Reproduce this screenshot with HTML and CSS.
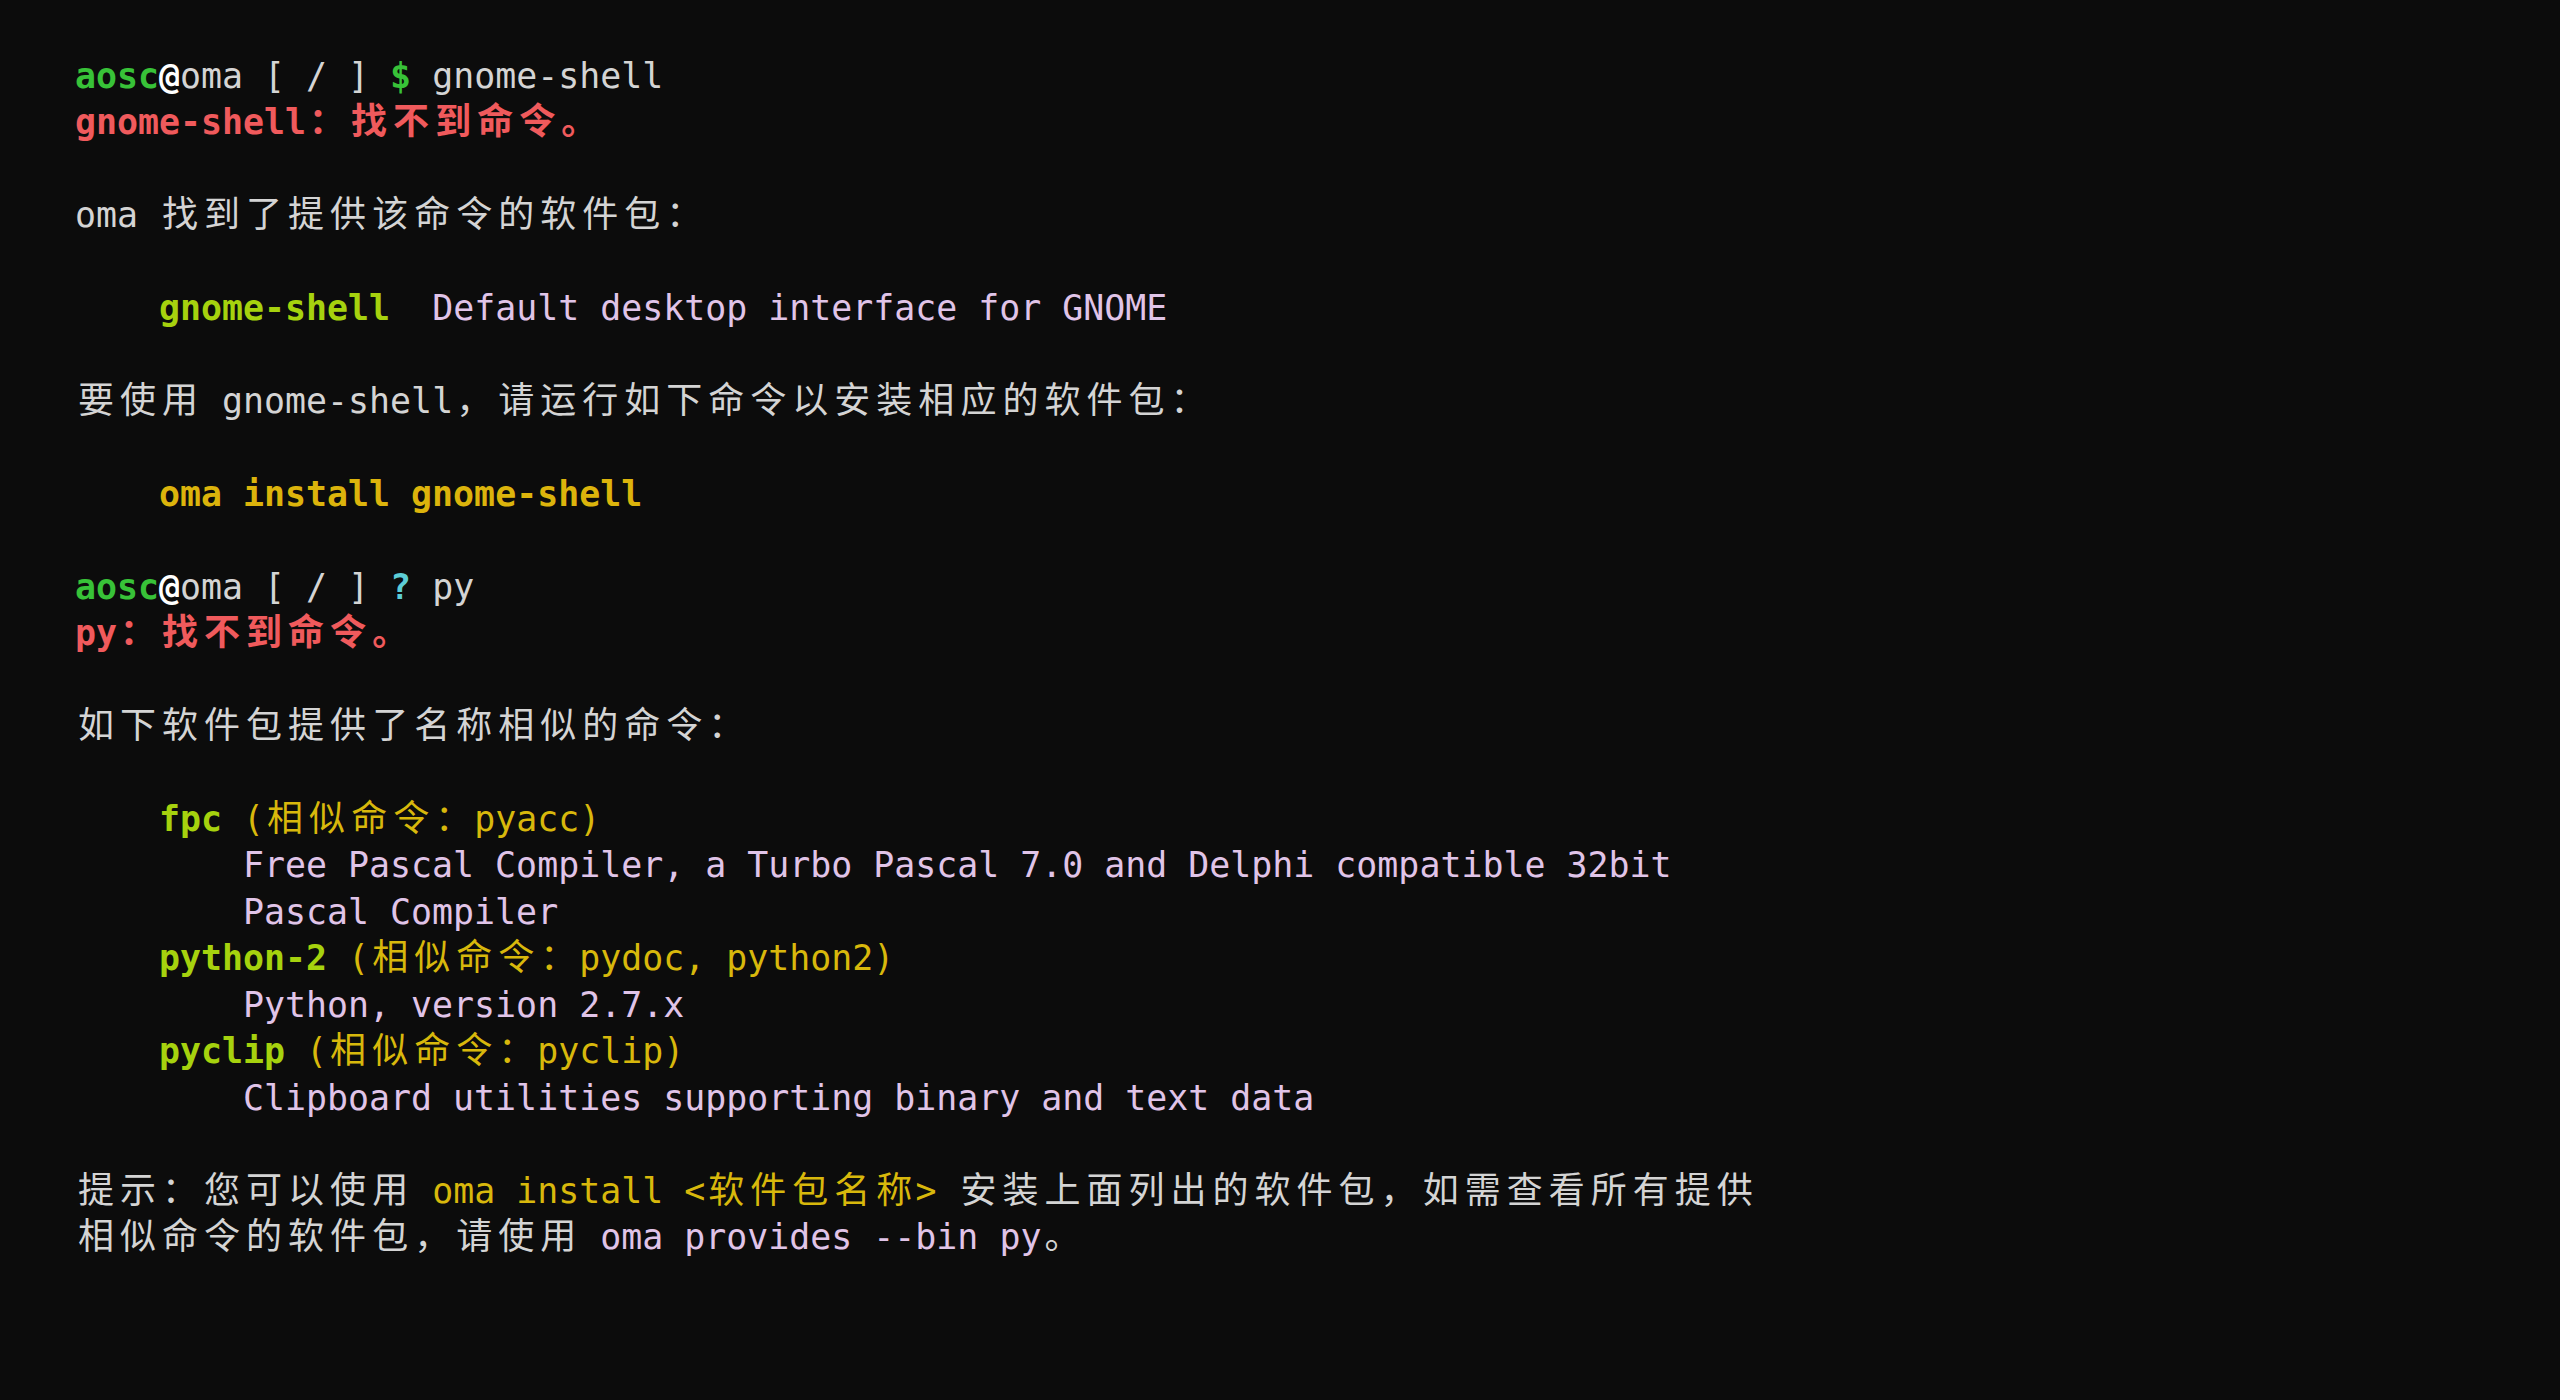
FILE: index.html
```html
<!DOCTYPE html>
<html lang="zh-CN">
<head>
<meta charset="utf-8">
<title>oma command-not-found</title>
<link rel="stylesheet" href="styles.css">
</head>
<body>
<div class="term">
<div class="line"><span class="b green">aosc</span><span class="b white">@</span>oma [ / ] <span class="b green">$</span> gnome-shell</div>
<div class="line b red">gnome-shell<span class="w">：找不到命令。</span></div>
<div class="line"></div>
<div class="line">oma <span class="w">找到了提供该命令的软件包：</span></div>
<div class="line"></div>
<div class="line">    <span class="b lime">gnome-shell</span>  <span class="pink">Default desktop interface for GNOME</span></div>
<div class="line"></div>
<div class="line"><span class="w">要使用</span> gnome-shell<span class="w">，请运行如下命令以安装相应的软件包：</span></div>
<div class="line"></div>
<div class="line">    <span class="b gold">oma install gnome-shell</span></div>
<div class="line"></div>
<div class="line"><span class="b green">aosc</span><span class="b white">@</span>oma [ / ] <span class="b cyan">?</span> py</div>
<div class="line b red">py<span class="w">：找不到命令。</span></div>
<div class="line"></div>
<div class="line"><span class="w">如下软件包提供了名称相似的命令：</span></div>
<div class="line"></div>
<div class="line">    <span class="b lime">fpc</span> <span class="yellow">(<span class="w">相似命令：</span>pyacc)</span></div>
<div class="line pink">        Free Pascal Compiler, a Turbo Pascal 7.0 and Delphi compatible 32bit</div>
<div class="line pink">        Pascal Compiler</div>
<div class="line">    <span class="b lime">python-2</span> <span class="yellow">(<span class="w">相似命令：</span>pydoc, python2)</span></div>
<div class="line pink">        Python, version 2.7.x</div>
<div class="line">    <span class="b lime">pyclip</span> <span class="yellow">(<span class="w">相似命令：</span>pyclip)</span></div>
<div class="line pink">        Clipboard utilities supporting binary and text data</div>
<div class="line"></div>
<div class="line"><span class="w">提示：您可以使用</span> <span class="yellow">oma install &lt;<span class="w">软件包名称</span>&gt;</span> <span class="w">安装上面列出的软件包，如需查看所有提供</span></div>
<div class="line"><span class="w">相似命令的软件包，请使用</span> <span class="pink">oma provides --bin py</span><span class="w">。</span></div>
</div>
</body>
</html>
```

FILE: styles.css
```css
html, body {
  margin: 0;
  padding: 0;
  background: #0c0c0c;
}

body {
  width: 2560px;
  height: 1400px;
  overflow: hidden;
}

.term {
  --cell: 21.01px;
  padding: 53px 0 0 75px;
  font-family: "DejaVu Sans Mono", "Noto Sans CJK SC", monospace;
  font-size: 34.9px;
  color: #d4d4d4;
}

.line {
  height: 46.45px;
  line-height: 46.45px;
  white-space: pre;
}

.w {
  font-size: 36px;
  letter-spacing: calc(2 * var(--cell) - 1em);
  padding-left: calc(var(--cell) - 0.5em);
  margin-right: calc(0.5em - var(--cell));
}

.b { font-weight: bold; }

.green { color: #38c238; }
.white { color: #ffffff; }
.red { color: #f05a5c; }
.lime { color: #a6d20e; }
.pink { color: #e0c4e8; }
.gold { color: #dcb40c; }
.cyan { color: #5ccdd6; }
.yellow { color: #d8b80c; }
```
